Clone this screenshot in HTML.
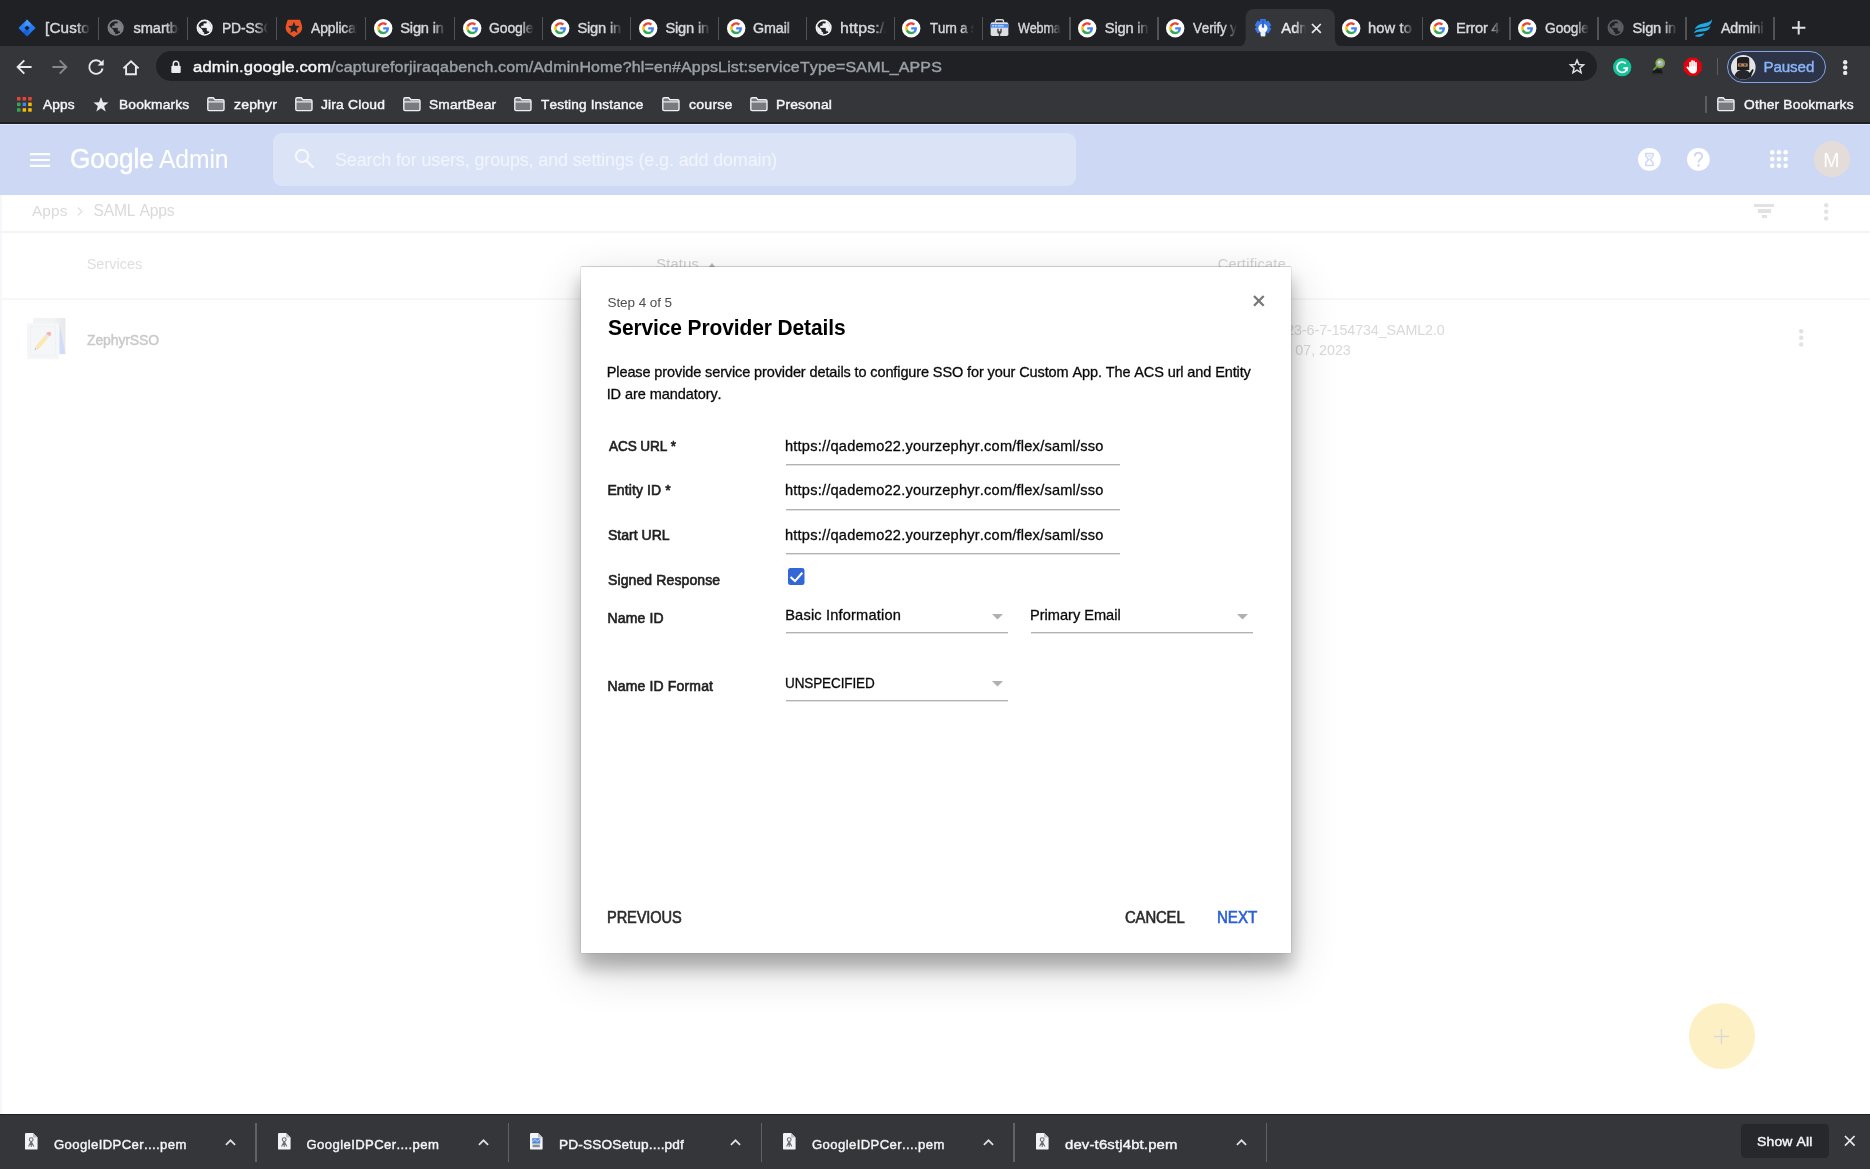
<!DOCTYPE html>
<html lang="en"><head><meta charset="utf-8"><title>Admin console</title>
<style>

*{margin:0;padding:0;box-sizing:border-box}
html,body{width:1870px;height:1169px;overflow:hidden;background:#fff;font-family:"Liberation Sans",sans-serif}
#root{position:absolute;left:0;top:0;width:1870px;height:1169px;will-change:transform}
.a{position:absolute}
.t{position:absolute;white-space:pre;font-kerning:none}
svg{position:absolute;overflow:visible}
#tabstrip{left:0;top:0;width:1870px;height:47px;background:#202124}
#toolbar{left:0;top:46px;width:1870px;height:76px;background:#35363a}
#chromeline{left:0;top:122px;width:1870px;height:2px;background:#1f2023}
#omni{left:155.7px;top:50.7px;width:1441.6px;height:30.8px;border-radius:15.4px;background:#202124}
.sep{position:absolute;width:1.6px;background:#505256;top:17.4px;height:22.2px}
.clip{position:absolute;top:14px;height:28px;overflow:hidden}
.clip .t{position:absolute}
.fade{position:absolute;top:0;right:0;height:28px;width:13px;background:linear-gradient(to right,rgba(32,33,36,0),#202124 100%)}
.fadea{position:absolute;top:0;right:0;height:28px;width:11px;background:linear-gradient(to right,rgba(53,54,58,0),#35363a 100%)}
#hdr{left:0;top:124px;width:1870px;height:70.5px;background:#cdd9f4;border-top:1px solid #dfe8fb}
#search{left:272.7px;top:132.6px;width:803.5px;height:53.3px;border-radius:9px;background:#dbe4f7}
.hl{position:absolute;left:0;width:1870px;height:2px;background:#f4f4f4}
#dlbar{left:0;top:1114px;width:1870px;height:55px;background:#35363a;border-top:1px solid #1f2023}
.dsep{position:absolute;width:1.2px;background:#5f6368;top:1122.5px;height:39px}
#showall{left:1740.5px;top:1124px;width:88.5px;height:33.5px;border-radius:4.5px;background:#27282c}
#dialog{left:580px;top:266px;width:712px;height:688px;background:#fff;border:1px solid rgba(0,0,0,.08);border-top-color:rgba(0,0,0,.17);border-bottom-color:rgba(0,0,0,.05);border-radius:2.2px;background-clip:padding-box;box-shadow:0 13.4px 16.7px rgba(0,0,0,.24),0 16px 46px rgba(0,0,0,.19)}
.ul{position:absolute;height:2px;background:linear-gradient(#b2b2b2 0,#b2b2b2 50%,#e2e2e2 50%,#e2e2e2 100%)}
#paused{left:1727.4px;top:51px;width:98.8px;height:32px;border-radius:16px;background:#2d3447;border:1.8px solid #7fa5e8}
#fab{left:1688.5px;top:1003px;width:66px;height:66px;border-radius:50%;background:#fdf0c4}
#avatar{left:1814.2px;top:141.4px;width:35.6px;height:35.6px;border-radius:50%;background:#e4dcd9}

</style></head>
<body>
<div id="root">
<div id="tabstrip" class="a"></div><div id="toolbar" class="a"></div><div id="chromeline" class="a"></div><div id="omni" class="a"></div><svg style="left:1236px;top:8.8px" width="108.6" height="38" viewBox="0 0 108.6 38"><path d="M0 38 C6.5 38 9.6 35 9.6 28.4 L9.6 9.6 C9.6 3.2 12.8 0 19.2 0 L89.3 0 C95.7 0 98.9 3.2 98.9 9.6 L98.9 28.4 C98.9 35 102 38 108.6 38 Z" fill="#35363a"/></svg><div class="clip" style="left:44.7px;width:44.9px"><span class="t" style="left:-0.08px;top:4px;font-size:14.7px;line-height:21px;color:#d6d8dc;letter-spacing:0.150px;transform:scaleX(1.0352);transform-origin:0 0;-webkit-text-stroke:0.42px currentColor;">[Custom</span><div class="fade"></div></div><div class="sep" style="left:97.6px"></div><svg style="left:17.60px;top:19.00px" width="18.00" height="18.00" viewBox="0 0 24 24" ><defs><linearGradient id="jg" x1="0" y1="0" x2="0" y2="1"><stop offset="0" stop-color="#2f8bff"/><stop offset="1" stop-color="#1b6cf0"/></linearGradient></defs><path d="M12 0.6 L23.4 12 L12 23.4 L0.6 12 Z" fill="url(#jg)"/><path d="M12 0.6 L17.6 6.2 L12 11.8 L8.4 8.2 Z" fill="#5aa2ff" opacity=".55"/><path d="M12 23.4 L6.4 17.8 L12 12.2 L15.6 15.8 Z" fill="#0f52c4" opacity=".55"/><path d="M12 8.6 L15.4 12 L12 15.4 L8.6 12 Z" fill="#202124"/></svg><div class="clip" style="left:132.8px;width:45.8px"><span class="t" style="left:0.59px;top:4px;font-size:14.7px;line-height:21px;color:#d6d8dc;letter-spacing:-0.073px;-webkit-text-stroke:0.42px currentColor;">smartbe</span><div class="fade"></div></div><div class="sep" style="left:186.6px"></div><svg style="left:106.15px;top:18.35px" width="19.30" height="19.30" viewBox="0 0 24 24" ><circle cx="12" cy="12" r="10" fill="#80848a"/><circle cx="12" cy="12" r="8.1" fill="#202124"/><path fill="#80848a" stroke="#80848a" stroke-width="0.7" d="M11 19.93c-3.95-.49-7-3.85-7-7.930 0-.62.08-1.21.21-1.79L9 15v1c0 1.1.9 2 2 2v1.930z"/><path fill="#80848a" stroke="#80848a" stroke-width="0.7" d="M17.9 17.39c-.26-.81-1-1.39-1.9-1.39h-1v-3c0-.55-.45-1-1-1H8v-2h2c.55 0 1-.45 1-1V7h2c1.1 0 2-.9 2-2v-.41c2.93 1.19 5 4.06 5 7.41 0 2.080-.8 3.97-2.1 5.390z"/></svg><div class="clip" style="left:222.5px;width:45.3px"><span class="t" style="left:-0.13px;top:4px;font-size:14.7px;line-height:21px;color:#d6d8dc;letter-spacing:-0.120px;transform:scaleX(0.9405);transform-origin:0 0;-webkit-text-stroke:0.42px currentColor;">PD-SSO</span><div class="fade"></div></div><div class="sep" style="left:275.8px"></div><svg style="left:195.25px;top:18.35px" width="19.30" height="19.30" viewBox="0 0 24 24" ><circle cx="12" cy="12" r="10" fill="#f1f3f4"/><circle cx="12" cy="12" r="8.1" fill="#202124"/><path fill="#f1f3f4" stroke="#f1f3f4" stroke-width="0.7" d="M11 19.93c-3.95-.49-7-3.85-7-7.930 0-.62.08-1.21.21-1.79L9 15v1c0 1.1.9 2 2 2v1.930z"/><path fill="#f1f3f4" stroke="#f1f3f4" stroke-width="0.7" d="M17.9 17.39c-.26-.81-1-1.39-1.9-1.39h-1v-3c0-.55-.45-1-1-1H8v-2h2c.55 0 1-.45 1-1V7h2c1.1 0 2-.9 2-2v-.41c2.93 1.19 5 4.06 5 7.41 0 2.080-.8 3.97-2.1 5.390z"/></svg><div class="clip" style="left:310.5px;width:46.2px"><span class="t" style="left:0.97px;top:4px;font-size:14.7px;line-height:21px;color:#d6d8dc;letter-spacing:-0.120px;transform:scaleX(0.9468);transform-origin:0 0;-webkit-text-stroke:0.42px currentColor;">Applicat</span><div class="fade"></div></div><div class="sep" style="left:364.7px"></div><svg style="left:284.90px;top:18.90px" width="17.80" height="18.60" viewBox="0 0 24 26" ><path d="M3.4 1 H20.6 L23.2 9 C24.4 13.2 22.8 17.6 19.3 20.3 L12 25.6 L4.7 20.3 C1.2 17.6 -0.4 13.2 0.8 9 Z" fill="#eb5424"/><path d="M12.00 4.00 L14.29 9.44 L20.18 9.94 L15.71 13.81 L17.05 19.56 L12.00 16.50 L6.95 19.56 L8.29 13.81 L3.82 9.94 L9.71 9.44 Z" fill="#24262b"/></svg><div class="clip" style="left:399.9px;width:45.9px"><span class="t" style="left:0.33px;top:4px;font-size:14.7px;line-height:21px;color:#d6d8dc;letter-spacing:-0.200px;-webkit-text-stroke:0.42px currentColor;">Sign in -</span><div class="fade"></div></div><div class="sep" style="left:453.8px"></div><svg style="left:373.80px;top:18.80px" width="18.40" height="18.40" viewBox="0 0 72 72" ><circle cx="36" cy="36" r="36" fill="#fff"/><g transform="translate(12.5,12.5) scale(0.98)"><path fill="#EA4335" d="M24 9.5c3.54 0 6.71 1.22 9.21 3.6l6.85-6.85C35.9 2.38 30.47 0 24 0 14.62 0 6.51 5.38 2.56 13.22l7.98 6.19C12.43 13.72 17.74 9.5 24 9.5z"/><path fill="#4285F4" d="M46.98 24.55c0-1.57-.15-3.09-.38-4.55H24v9.02h12.94c-.58 2.96-2.26 5.48-4.78 7.18l7.73 6c4.51-4.18 7.09-10.36 7.09-17.65z"/><path fill="#FBBC05" d="M10.53 28.59c-.48-1.45-.76-2.99-.76-4.59s.27-3.14.76-4.59l-7.98-6.19C.92 16.46 0 20.12 0 24c0 3.88.92 7.54 2.56 10.78l7.97-6.19z"/><path fill="#34A853" d="M24 48c6.48 0 11.93-2.13 15.89-5.81l-7.73-6c-2.15 1.45-4.92 2.3-8.16 2.3-6.26 0-11.57-4.22-13.47-9.91l-7.98 6.19C6.51 42.62 14.62 48 24 48z"/></g></svg><div class="clip" style="left:489.2px;width:44.6px"><span class="t" style="left:0.30px;top:4px;font-size:14.7px;line-height:21px;color:#d6d8dc;letter-spacing:-0.120px;transform:scaleX(0.9519);transform-origin:0 0;-webkit-text-stroke:0.42px currentColor;">Google A</span><div class="fade"></div></div><div class="sep" style="left:541.8px"></div><svg style="left:462.80px;top:18.80px" width="18.40" height="18.40" viewBox="0 0 72 72" ><circle cx="36" cy="36" r="36" fill="#fff"/><g transform="translate(12.5,12.5) scale(0.98)"><path fill="#EA4335" d="M24 9.5c3.54 0 6.71 1.22 9.21 3.6l6.85-6.85C35.9 2.38 30.47 0 24 0 14.62 0 6.51 5.38 2.56 13.22l7.98 6.19C12.43 13.72 17.74 9.5 24 9.5z"/><path fill="#4285F4" d="M46.98 24.55c0-1.57-.15-3.09-.38-4.55H24v9.02h12.94c-.58 2.96-2.26 5.48-4.78 7.18l7.73 6c4.51-4.18 7.09-10.36 7.09-17.65z"/><path fill="#FBBC05" d="M10.53 28.59c-.48-1.45-.76-2.99-.76-4.59s.27-3.14.76-4.59l-7.98-6.19C.92 16.46 0 20.12 0 24c0 3.88.92 7.54 2.56 10.78l7.97-6.19z"/><path fill="#34A853" d="M24 48c6.48 0 11.93-2.13 15.89-5.81l-7.73-6c-2.15 1.45-4.92 2.3-8.16 2.3-6.26 0-11.57-4.22-13.47-9.91l-7.98 6.19C6.51 42.62 14.62 48 24 48z"/></g></svg><div class="clip" style="left:577.1px;width:44.7px"><span class="t" style="left:0.33px;top:4px;font-size:14.7px;line-height:21px;color:#d6d8dc;letter-spacing:-0.200px;-webkit-text-stroke:0.42px currentColor;">Sign in -</span><div class="fade"></div></div><div class="sep" style="left:629.8px"></div><svg style="left:550.60px;top:18.80px" width="18.40" height="18.40" viewBox="0 0 72 72" ><circle cx="36" cy="36" r="36" fill="#fff"/><g transform="translate(12.5,12.5) scale(0.98)"><path fill="#EA4335" d="M24 9.5c3.54 0 6.71 1.22 9.21 3.6l6.85-6.85C35.9 2.38 30.47 0 24 0 14.62 0 6.51 5.38 2.56 13.22l7.98 6.19C12.43 13.72 17.74 9.5 24 9.5z"/><path fill="#4285F4" d="M46.98 24.55c0-1.57-.15-3.09-.38-4.55H24v9.02h12.94c-.58 2.96-2.26 5.48-4.78 7.18l7.73 6c4.51-4.18 7.09-10.36 7.09-17.65z"/><path fill="#FBBC05" d="M10.53 28.59c-.48-1.45-.76-2.99-.76-4.59s.27-3.14.76-4.59l-7.98-6.19C.92 16.46 0 20.12 0 24c0 3.88.92 7.54 2.56 10.78l7.97-6.19z"/><path fill="#34A853" d="M24 48c6.48 0 11.93-2.13 15.89-5.81l-7.73-6c-2.15 1.45-4.92 2.3-8.16 2.3-6.26 0-11.57-4.22-13.47-9.91l-7.98 6.19C6.51 42.62 14.62 48 24 48z"/></g></svg><div class="clip" style="left:665.1px;width:44.7px"><span class="t" style="left:0.33px;top:4px;font-size:14.7px;line-height:21px;color:#d6d8dc;letter-spacing:-0.200px;-webkit-text-stroke:0.42px currentColor;">Sign in -</span><div class="fade"></div></div><div class="sep" style="left:717.8px"></div><svg style="left:638.50px;top:18.80px" width="18.40" height="18.40" viewBox="0 0 72 72" ><circle cx="36" cy="36" r="36" fill="#fff"/><g transform="translate(12.5,12.5) scale(0.98)"><path fill="#EA4335" d="M24 9.5c3.54 0 6.71 1.22 9.21 3.6l6.85-6.85C35.9 2.38 30.47 0 24 0 14.62 0 6.51 5.38 2.56 13.22l7.98 6.19C12.43 13.72 17.74 9.5 24 9.5z"/><path fill="#4285F4" d="M46.98 24.55c0-1.57-.15-3.09-.38-4.55H24v9.02h12.94c-.58 2.96-2.26 5.48-4.78 7.18l7.73 6c4.51-4.18 7.09-10.36 7.09-17.65z"/><path fill="#FBBC05" d="M10.53 28.59c-.48-1.45-.76-2.99-.76-4.59s.27-3.14.76-4.59l-7.98-6.19C.92 16.46 0 20.12 0 24c0 3.88.92 7.54 2.56 10.78l7.97-6.19z"/><path fill="#34A853" d="M24 48c6.48 0 11.93-2.13 15.89-5.81l-7.73-6c-2.15 1.45-4.92 2.3-8.16 2.3-6.26 0-11.57-4.22-13.47-9.91l-7.98 6.19C6.51 42.62 14.62 48 24 48z"/></g></svg><div class="clip" style="left:752.5px;width:45.2px"><span class="t" style="left:0.28px;top:4px;font-size:14.7px;line-height:21px;color:#d6d8dc;letter-spacing:-0.120px;transform:scaleX(0.9735);transform-origin:0 0;-webkit-text-stroke:0.42px currentColor;">Gmail</span><div class="fade"></div></div><div class="sep" style="left:805.7px"></div><svg style="left:726.50px;top:18.80px" width="18.40" height="18.40" viewBox="0 0 72 72" ><circle cx="36" cy="36" r="36" fill="#fff"/><g transform="translate(12.5,12.5) scale(0.98)"><path fill="#EA4335" d="M24 9.5c3.54 0 6.71 1.22 9.21 3.6l6.85-6.85C35.9 2.38 30.47 0 24 0 14.62 0 6.51 5.38 2.56 13.22l7.98 6.19C12.43 13.72 17.74 9.5 24 9.5z"/><path fill="#4285F4" d="M46.98 24.55c0-1.57-.15-3.09-.38-4.55H24v9.02h12.94c-.58 2.96-2.26 5.48-4.78 7.18l7.73 6c4.51-4.18 7.09-10.36 7.09-17.65z"/><path fill="#FBBC05" d="M10.53 28.59c-.48-1.45-.76-2.99-.76-4.59s.27-3.14.76-4.59l-7.98-6.19C.92 16.46 0 20.12 0 24c0 3.88.92 7.54 2.56 10.78l7.97-6.19z"/><path fill="#34A853" d="M24 48c6.48 0 11.93-2.13 15.89-5.81l-7.73-6c-2.15 1.45-4.92 2.3-8.16 2.3-6.26 0-11.57-4.22-13.47-9.91l-7.98 6.19C6.51 42.62 14.62 48 24 48z"/></g></svg><div class="clip" style="left:840.5px;width:45.2px"><span class="t" style="left:-0.10px;top:4px;font-size:14.7px;line-height:21px;color:#d6d8dc;letter-spacing:0.150px;transform:scaleX(1.0828);transform-origin:0 0;-webkit-text-stroke:0.42px currentColor;">https://a</span><div class="fade"></div></div><div class="sep" style="left:893.7px"></div><svg style="left:814.05px;top:18.35px" width="19.30" height="19.30" viewBox="0 0 24 24" ><circle cx="12" cy="12" r="10" fill="#f1f3f4"/><circle cx="12" cy="12" r="8.1" fill="#202124"/><path fill="#f1f3f4" stroke="#f1f3f4" stroke-width="0.7" d="M11 19.93c-3.95-.49-7-3.85-7-7.930 0-.62.08-1.21.21-1.79L9 15v1c0 1.1.9 2 2 2v1.930z"/><path fill="#f1f3f4" stroke="#f1f3f4" stroke-width="0.7" d="M17.9 17.39c-.26-.81-1-1.39-1.9-1.39h-1v-3c0-.55-.45-1-1-1H8v-2h2c.55 0 1-.45 1-1V7h2c1.1 0 2-.9 2-2v-.41c2.93 1.19 5 4.06 5 7.41 0 2.080-.8 3.97-2.1 5.390z"/></svg><div class="clip" style="left:929.0px;width:44.5px"><span class="t" style="left:0.70px;top:4px;font-size:14.7px;line-height:21px;color:#d6d8dc;letter-spacing:-0.120px;transform:scaleX(0.8959);transform-origin:0 0;-webkit-text-stroke:0.42px currentColor;">Turn a s</span><div class="fade"></div></div><div class="sep" style="left:981.5px"></div><svg style="left:902.40px;top:18.80px" width="18.40" height="18.40" viewBox="0 0 72 72" ><circle cx="36" cy="36" r="36" fill="#fff"/><g transform="translate(12.5,12.5) scale(0.98)"><path fill="#EA4335" d="M24 9.5c3.54 0 6.71 1.22 9.21 3.6l6.85-6.85C35.9 2.38 30.47 0 24 0 14.62 0 6.51 5.38 2.56 13.22l7.98 6.19C12.43 13.72 17.74 9.5 24 9.5z"/><path fill="#4285F4" d="M46.98 24.55c0-1.57-.15-3.09-.38-4.55H24v9.02h12.94c-.58 2.96-2.26 5.48-4.78 7.18l7.73 6c4.51-4.18 7.09-10.36 7.09-17.65z"/><path fill="#FBBC05" d="M10.53 28.59c-.48-1.45-.76-2.99-.76-4.59s.27-3.14.76-4.59l-7.98-6.19C.92 16.46 0 20.12 0 24c0 3.88.92 7.54 2.56 10.78l7.97-6.19z"/><path fill="#34A853" d="M24 48c6.48 0 11.93-2.13 15.89-5.81l-7.73-6c-2.15 1.45-4.92 2.3-8.16 2.3-6.26 0-11.57-4.22-13.47-9.91l-7.98 6.19C6.51 42.62 14.62 48 24 48z"/></g></svg><div class="clip" style="left:1017.0px;width:44.4px"><span class="t" style="left:0.94px;top:4px;font-size:14.7px;line-height:21px;color:#d6d8dc;letter-spacing:-0.120px;transform:scaleX(0.8529);transform-origin:0 0;-webkit-text-stroke:0.42px currentColor;">Webmai</span><div class="fade"></div></div><div class="sep" style="left:1069.4px"></div><svg style="left:990.10px;top:19.10px" width="19.00" height="17.80" viewBox="0 0 24 22.4" ><path d="M7 4.5 V2.6 C7 1.7 7.7 1 8.6 1 H15.4 C16.3 1 17 1.7 17 2.6 V4.5" fill="none" stroke="#d5d7db" stroke-width="1.8"/><rect x="0.8" y="4" width="22.4" height="17.4" rx="2.2" fill="#dcdee2"/><rect x="0.8" y="6.3" width="22.4" height="4.6" fill="#4a8af4"/><rect x="3" y="7.9" width="2" height="1.4" fill="#fff"/><rect x="6.4" y="7.9" width="2" height="1.4" fill="#fff"/><rect x="9.8" y="7.9" width="7.5" height="1.4" fill="#dbe7fd"/><path d="M9.2 12.2 V15.6 C9.2 17.4 10.3 18.7 12 18.7 C13.7 18.7 14.8 17.4 14.8 15.6 V12.2 H13.1 V15.3 H10.9 V12.2 Z" fill="#3a3d42"/><rect x="11.1" y="17.8" width="1.8" height="3.6" fill="#3a3d42"/></svg><div class="clip" style="left:1104.5px;width:44.9px"><span class="t" style="left:0.33px;top:4px;font-size:14.7px;line-height:21px;color:#d6d8dc;letter-spacing:-0.200px;-webkit-text-stroke:0.42px currentColor;">Sign in -</span><div class="fade"></div></div><div class="sep" style="left:1157.4px"></div><svg style="left:1078.20px;top:18.80px" width="18.40" height="18.40" viewBox="0 0 72 72" ><circle cx="36" cy="36" r="36" fill="#fff"/><g transform="translate(12.5,12.5) scale(0.98)"><path fill="#EA4335" d="M24 9.5c3.54 0 6.71 1.22 9.21 3.6l6.85-6.85C35.9 2.38 30.47 0 24 0 14.62 0 6.51 5.38 2.56 13.22l7.98 6.19C12.43 13.72 17.74 9.5 24 9.5z"/><path fill="#4285F4" d="M46.98 24.55c0-1.57-.15-3.09-.38-4.55H24v9.02h12.94c-.58 2.96-2.26 5.48-4.78 7.18l7.73 6c4.51-4.18 7.09-10.36 7.09-17.65z"/><path fill="#FBBC05" d="M10.53 28.59c-.48-1.45-.76-2.99-.76-4.59s.27-3.14.76-4.59l-7.98-6.19C.92 16.46 0 20.12 0 24c0 3.88.92 7.54 2.56 10.78l7.97-6.19z"/><path fill="#34A853" d="M24 48c6.48 0 11.93-2.13 15.89-5.81l-7.73-6c-2.15 1.45-4.92 2.3-8.16 2.3-6.26 0-11.57-4.22-13.47-9.91l-7.98 6.19C6.51 42.62 14.62 48 24 48z"/></g></svg><div class="clip" style="left:1192.4px;width:45.0px"><span class="t" style="left:0.94px;top:4px;font-size:14.7px;line-height:21px;color:#d6d8dc;letter-spacing:-0.120px;transform:scaleX(0.9118);transform-origin:0 0;-webkit-text-stroke:0.42px currentColor;">Verify yo</span><div class="fade"></div></div><svg style="left:1166.10px;top:18.80px" width="18.40" height="18.40" viewBox="0 0 72 72" ><circle cx="36" cy="36" r="36" fill="#fff"/><g transform="translate(12.5,12.5) scale(0.98)"><path fill="#EA4335" d="M24 9.5c3.54 0 6.71 1.22 9.21 3.6l6.85-6.85C35.9 2.38 30.47 0 24 0 14.62 0 6.51 5.38 2.56 13.22l7.98 6.19C12.43 13.72 17.74 9.5 24 9.5z"/><path fill="#4285F4" d="M46.98 24.55c0-1.57-.15-3.09-.38-4.55H24v9.02h12.94c-.58 2.96-2.26 5.48-4.78 7.18l7.73 6c4.51-4.18 7.09-10.36 7.09-17.65z"/><path fill="#FBBC05" d="M10.53 28.59c-.48-1.45-.76-2.99-.76-4.59s.27-3.14.76-4.59l-7.98-6.19C.92 16.46 0 20.12 0 24c0 3.88.92 7.54 2.56 10.78l7.97-6.19z"/><path fill="#34A853" d="M24 48c6.48 0 11.93-2.13 15.89-5.81l-7.73-6c-2.15 1.45-4.92 2.3-8.16 2.3-6.26 0-11.57-4.22-13.47-9.91l-7.98 6.19C6.51 42.62 14.62 48 24 48z"/></g></svg><div class="clip" style="left:1280.3px;width:26.2px"><span class="t" style="left:0.97px;top:4px;font-size:14.7px;line-height:21px;color:#e8eaed;letter-spacing:0.107px;-webkit-text-stroke:0.42px currentColor;">Adm</span><div class="fadea"></div></div><svg style="left:1253.40px;top:16.80px" width="20.00" height="20.00" viewBox="-10 -10 20 20" ><path d="M-2.29 -7.40 L2.29 -7.40 L2.46 -5.36 L3.41 -4.81 L5.27 -5.69 L7.56 -1.72 L5.87 -0.55 L5.87 0.55 L7.56 1.72 L5.27 5.69 L3.41 4.81 L2.46 5.36 L2.29 7.40 L-2.29 7.40 L-2.46 5.36 L-3.41 4.81 L-5.27 5.69 L-7.56 1.72 L-5.87 0.55 L-5.87 -0.55 L-7.56 -1.72 L-5.27 -5.69 L-3.41 -4.81 L-2.46 -5.36 Z" fill="#3b78e7" stroke="#3b78e7" stroke-width="1.1" stroke-linejoin="round"/><circle cx="-0.1" cy="1.3" r="4.5" fill="#fafafa"/><rect x="-2.25" y="3.6" width="4.5" height="5.8" fill="#f1f1f1"/><rect x="-1.15" y="-7.2" width="2.3" height="7.9" rx="0.4" fill="#2f63d9"/></svg><div class="clip" style="left:1368.0px;width:45.5px"><span class="t" style="left:-0.02px;top:4px;font-size:14.7px;line-height:21px;color:#d6d8dc;letter-spacing:0.131px;-webkit-text-stroke:0.42px currentColor;">how to c</span><div class="fade"></div></div><div class="sep" style="left:1421.5px"></div><svg style="left:1342.10px;top:18.80px" width="18.40" height="18.40" viewBox="0 0 72 72" ><circle cx="36" cy="36" r="36" fill="#fff"/><g transform="translate(12.5,12.5) scale(0.98)"><path fill="#EA4335" d="M24 9.5c3.54 0 6.71 1.22 9.21 3.6l6.85-6.85C35.9 2.38 30.47 0 24 0 14.62 0 6.51 5.38 2.56 13.22l7.98 6.19C12.43 13.72 17.74 9.5 24 9.5z"/><path fill="#4285F4" d="M46.98 24.55c0-1.57-.15-3.09-.38-4.55H24v9.02h12.94c-.58 2.96-2.26 5.48-4.78 7.18l7.73 6c4.51-4.18 7.09-10.36 7.09-17.65z"/><path fill="#FBBC05" d="M10.53 28.59c-.48-1.45-.76-2.99-.76-4.59s.27-3.14.76-4.59l-7.98-6.19C.92 16.46 0 20.12 0 24c0 3.88.92 7.54 2.56 10.78l7.97-6.19z"/><path fill="#34A853" d="M24 48c6.48 0 11.93-2.13 15.89-5.81l-7.73-6c-2.15 1.45-4.92 2.3-8.16 2.3-6.26 0-11.57-4.22-13.47-9.91l-7.98 6.19C6.51 42.62 14.62 48 24 48z"/></g></svg><div class="clip" style="left:1456.3px;width:44.9px"><span class="t" style="left:-0.21px;top:4px;font-size:14.7px;line-height:21px;color:#d6d8dc;letter-spacing:-0.209px;-webkit-text-stroke:0.42px currentColor;">Error 40</span><div class="fade"></div></div><div class="sep" style="left:1509.2px"></div><svg style="left:1430.00px;top:18.80px" width="18.40" height="18.40" viewBox="0 0 72 72" ><circle cx="36" cy="36" r="36" fill="#fff"/><g transform="translate(12.5,12.5) scale(0.98)"><path fill="#EA4335" d="M24 9.5c3.54 0 6.71 1.22 9.21 3.6l6.85-6.85C35.9 2.38 30.47 0 24 0 14.62 0 6.51 5.38 2.56 13.22l7.98 6.19C12.43 13.72 17.74 9.5 24 9.5z"/><path fill="#4285F4" d="M46.98 24.55c0-1.57-.15-3.09-.38-4.55H24v9.02h12.94c-.58 2.96-2.26 5.48-4.78 7.18l7.73 6c4.51-4.18 7.09-10.36 7.09-17.65z"/><path fill="#FBBC05" d="M10.53 28.59c-.48-1.45-.76-2.99-.76-4.59s.27-3.14.76-4.59l-7.98-6.19C.92 16.46 0 20.12 0 24c0 3.88.92 7.54 2.56 10.78l7.97-6.19z"/><path fill="#34A853" d="M24 48c6.48 0 11.93-2.13 15.89-5.81l-7.73-6c-2.15 1.45-4.92 2.3-8.16 2.3-6.26 0-11.57-4.22-13.47-9.91l-7.98 6.19C6.51 42.62 14.62 48 24 48z"/></g></svg><div class="clip" style="left:1544.3px;width:44.9px"><span class="t" style="left:0.30px;top:4px;font-size:14.7px;line-height:21px;color:#d6d8dc;letter-spacing:-0.120px;transform:scaleX(0.9409);transform-origin:0 0;-webkit-text-stroke:0.42px currentColor;">Google A</span><div class="fade"></div></div><div class="sep" style="left:1597.2px"></div><svg style="left:1518.00px;top:18.80px" width="18.40" height="18.40" viewBox="0 0 72 72" ><circle cx="36" cy="36" r="36" fill="#fff"/><g transform="translate(12.5,12.5) scale(0.98)"><path fill="#EA4335" d="M24 9.5c3.54 0 6.71 1.22 9.21 3.6l6.85-6.85C35.9 2.38 30.47 0 24 0 14.62 0 6.51 5.38 2.56 13.22l7.98 6.19C12.43 13.72 17.74 9.5 24 9.5z"/><path fill="#4285F4" d="M46.98 24.55c0-1.57-.15-3.09-.38-4.55H24v9.02h12.94c-.58 2.96-2.26 5.48-4.78 7.18l7.73 6c4.51-4.18 7.09-10.36 7.09-17.65z"/><path fill="#FBBC05" d="M10.53 28.59c-.48-1.45-.76-2.99-.76-4.59s.27-3.14.76-4.59l-7.98-6.19C.92 16.46 0 20.12 0 24c0 3.88.92 7.54 2.56 10.78l7.97-6.19z"/><path fill="#34A853" d="M24 48c6.48 0 11.93-2.13 15.89-5.81l-7.73-6c-2.15 1.45-4.92 2.3-8.16 2.3-6.26 0-11.57-4.22-13.47-9.91l-7.98 6.19C6.51 42.62 14.62 48 24 48z"/></g></svg><div class="clip" style="left:1632.2px;width:45.0px"><span class="t" style="left:0.33px;top:4px;font-size:14.7px;line-height:21px;color:#d6d8dc;letter-spacing:-0.217px;-webkit-text-stroke:0.42px currentColor;">Sign in -</span><div class="fade"></div></div><div class="sep" style="left:1685.2px"></div><svg style="left:1605.55px;top:18.35px" width="19.30" height="19.30" viewBox="0 0 24 24" ><circle cx="12" cy="12" r="10" fill="#5c5f64"/><circle cx="12" cy="12" r="8.1" fill="#202124"/><path fill="#5c5f64" stroke="#5c5f64" stroke-width="0.7" d="M11 19.93c-3.95-.49-7-3.85-7-7.930 0-.62.08-1.21.21-1.79L9 15v1c0 1.1.9 2 2 2v1.930z"/><path fill="#5c5f64" stroke="#5c5f64" stroke-width="0.7" d="M17.9 17.39c-.26-.81-1-1.39-1.9-1.39h-1v-3c0-.55-.45-1-1-1H8v-2h2c.55 0 1-.45 1-1V7h2c1.1 0 2-.9 2-2v-.41c2.93 1.19 5 4.06 5 7.41 0 2.080-.8 3.97-2.1 5.390z"/></svg><div class="clip" style="left:1720.4px;width:44.7px"><span class="t" style="left:0.97px;top:4px;font-size:14.7px;line-height:21px;color:#d6d8dc;letter-spacing:-0.120px;transform:scaleX(0.9656);transform-origin:0 0;-webkit-text-stroke:0.42px currentColor;">Admini</span><div class="fade"></div></div><div class="sep" style="left:1773.1px"></div><svg style="left:1693.90px;top:19.00px" width="18.40" height="18.00" viewBox="0 0 18.4 18" ><path d="M18.1 0 C16 4.5 9 3.5 4.5 6 C2.5 7.2 1.2 8.8 1 10.2 C5 7.8 11 8.6 14.8 6.4 C17 5 18 2.6 18.1 0 Z" fill="#1fa9e2"/><path d="M16.4 6.9 C13.5 9.7 7 8.7 2.6 11.1 C1.2 11.9 0.3 12.9 0 14.1 C4 11.9 9.5 13.5 13.4 11.3 C15.2 10.3 16.2 8.7 16.4 6.9 Z" fill="#1fa9e2"/><path d="M10.6 13.9 C7.8 15.5 3.4 14.7 0.6 17.1 C3.2 18.6 9 17.9 10.6 13.9 Z" fill="#1fa9e2"/></svg><svg style="left:1312.20px;top:23.70px" width="8.80" height="8.80" viewBox="-4.40 -4.40 8.80 8.80" ><path d="M-4.40 -4.40 L4.40 4.40 M4.40 -4.40 L-4.40 4.40" stroke="#e8eaed" stroke-width="1.7" stroke-linecap="butt" fill="none"/></svg><svg style="left:1791.80px;top:21.40px" width="13.40" height="13.40" viewBox="-6.70 -6.70 13.40 13.40" ><path d="M-6.70 0 H6.70 M0 -6.70 V6.70" stroke="#dfe1e5" stroke-width="2.0" fill="none"/></svg><svg style="left:16.40px;top:58.60px" width="16.00" height="16.00" viewBox="-8 -8 16 16" ><g><path d="M7.6 0 H-6.0 M0.3 -6.7 L-6.4 0 L0.3 6.7" stroke="#e8eaed" stroke-width="1.9" fill="none" stroke-linejoin="miter"/></g></svg><svg style="left:52.30px;top:58.60px" width="16.00" height="16.00" viewBox="-8 -8 16 16" ><g transform="scale(-1,1)"><path d="M7.6 0 H-6.0 M0.3 -6.7 L-6.4 0 L0.3 6.7" stroke="#85888d" stroke-width="1.9" fill="none" stroke-linejoin="miter"/></g></svg><svg style="left:87.20px;top:57.60px" width="18.00" height="18.00" viewBox="-9 -9 18 18" ><path d="M5.3 -4.2 A6.75 6.75 0 1 0 6.65 1.5" stroke="#e8eaed" stroke-width="1.9" fill="none"/><path d="M7.7 -7.6 V-1.5 H1.6 Z" fill="#e8eaed"/></svg><svg style="left:122.30px;top:59.70px" width="18.00" height="16.00" viewBox="-9 -8 18 16" ><path d="M-7.6 0.4 L0 -6.6 L7.6 0.4 M-4.9 -1.6 V6.2 H4.9 V-1.6" stroke="#e8eaed" stroke-width="1.9" fill="none" stroke-linejoin="miter"/></svg><svg style="left:169.70px;top:60.10px" width="12.00" height="14.00" viewBox="-6 -7 12 14" ><rect x="-4.7" y="-1.2" width="9.4" height="7.2" rx="1" fill="#e8eaed"/><path d="M-2.7 -1 V-3 A2.7 2.7 0 0 1 2.7 -3 V-1" stroke="#e8eaed" stroke-width="1.5" fill="none"/></svg><span class="t" style="left:193.49px;top:56px;font-size:15.2px;line-height:21px;color:#f6f7f8;letter-spacing:0.150px;transform:scaleX(1.0929);transform-origin:0 0;-webkit-text-stroke:0.42px currentColor;">admin.google.com</span><span class="t" style="left:330.80px;top:56px;font-size:15.2px;line-height:21px;color:#9aa0a6;letter-spacing:0.150px;transform:scaleX(1.0520);transform-origin:0 0;-webkit-text-stroke:0.42px currentColor;">/captureforjiraqabench.com/AdminHome?hl=en#AppsList:serviceType=SAML_APPS</span><svg style="left:1568.40px;top:58.00px" width="18.00" height="18.00" viewBox="-9 -9 18 18" ><path d="M0.00 -6.90 L1.82 -2.51 L6.56 -2.13 L2.95 0.96 L4.06 5.58 L0.00 3.10 L-4.06 5.58 L-2.95 0.96 L-6.56 -2.13 L-1.82 -2.51 Z" stroke="#dfe1e5" stroke-width="1.5" fill="none" stroke-linejoin="miter"/></svg><svg style="left:1612.60px;top:57.60px" width="18.40" height="18.40" viewBox="-9.2 -9.2 18.4 18.4" ><circle cx="0" cy="0" r="9.15" fill="#15c39a"/><path d="M3.6 -3.7 A5.2 5.2 0 1 0 5.1 1.0 H1.2" stroke="#fff" stroke-width="1.7" fill="none"/><path d="M5.3 0.2 V4.4 L1.6 1 Z" fill="#fff"/></svg><svg style="left:1650.10px;top:57.90px" width="16.00" height="18.00" viewBox="-8 -9 16 18" ><path d="M-5.6 6.2 L-4.4 2.2 H3.4 L4.8 6.2 Z" fill="#17181a"/><path d="M-5.8 6.2 H5 V7.6 H-5.8 Z" fill="#2b2c2f"/><path d="M-4.6 3.2 L0.2 -2.2" stroke="#6a9a3a" stroke-width="1.8"/><circle cx="2.2" cy="-3.8" r="4" fill="#a9b0b6" stroke="#7cab3f" stroke-width="1.7"/><circle cx="1.2" cy="-4.8" r="1.4" fill="#d5dadf"/></svg><svg style="left:1683.40px;top:57.00px" width="19.40" height="19.40" viewBox="-9.7 -9.7 19.4 19.4" ><path d="M3.71 -8.96 L8.96 -3.71 L8.96 3.71 L3.71 8.96 L-3.71 8.96 L-8.96 3.71 L-8.96 -3.71 L-3.71 -8.96 Z" fill="#e8000d"/><rect x="-3.50" y="-5.00" width="1.75" height="8" rx="0.85" fill="#fff"/><rect x="-1.50" y="-6.60" width="1.75" height="8" rx="0.85" fill="#fff"/><rect x="0.50" y="-6.30" width="1.75" height="8" rx="0.85" fill="#fff"/><rect x="2.50" y="-4.70" width="1.75" height="8" rx="0.85" fill="#fff"/><path d="M-3.5 -0.4 H4.25 V3.0 C4.25 5.4 2.6 6.8 0.4 6.8 C-1.5 6.8 -2.6 6.0 -3.5 4.6 L-6.4 0.6 C-5.9 -0.5 -4.6 -0.3 -3.5 1.3 Z" fill="#fff"/></svg><div class="a" style="left:1717.2px;top:58.2px;width:1.3px;height:17.2px;background:#5a5d62"></div><div id="paused" class="a"></div><svg style="left:1730.70px;top:54.50px" width="24.60" height="24.60" viewBox="-12.3 -12.3 24.6 24.6" ><defs><clipPath id="avc"><circle cx="0" cy="0" r="12.3"/></clipPath></defs><circle cx="0" cy="0" r="12.3" fill="#e4e4e4"/><g clip-path="url(#avc)"><path d="M-6.3 -7.6 C-6.3 -9.4 -4.6 -10.2 -2.2 -10.2 H3.4 C5 -10.2 6 -9.2 6 -7.6 V2.6 H-6.3 Z" fill="#1d1f23"/><rect x="-5.4" y="-3.9" width="9.8" height="3.2" fill="#b98a5a"/><rect x="-4" y="-3.0" width="2" height="1.2" fill="#222"/><rect x="0.8" y="-3.0" width="2" height="1.2" fill="#222"/><path d="M-9.5 13 C-9.5 6.5 -6 2.4 -0.3 2.4 C5.2 2.4 8.6 6.5 8.6 13 Z" fill="#24262b"/><path d="M4.8 7.8 L9.2 1.8 L10.4 2.6 L7.4 9.6 Z" fill="#1d1f23"/></g></svg><span class="t" style="left:1763.45px;top:56px;font-size:15.2px;line-height:21px;color:#8ab4f8;letter-spacing:-0.118px;-webkit-text-stroke:0.42px currentColor;">Paused</span><svg style="left:1842.20px;top:58.75px" width="6.40" height="17.10" viewBox="-3.20 -8.55 6.40 17.10" ><circle cx="0" cy="-5.35" r="2.20" fill="#e8eaed"/><circle cx="0" cy="0.00" r="2.20" fill="#e8eaed"/><circle cx="0" cy="5.35" r="2.20" fill="#e8eaed"/></svg><svg style="left:17.00px;top:97.30px" width="15" height="15" viewBox="0 0 15 15"><rect x="0.00" y="0.00" width="3.50" height="3.50" fill="#ea4335"/><rect x="5.60" y="0.00" width="3.50" height="3.50" fill="#ea4335"/><rect x="11.20" y="0.00" width="3.50" height="3.50" fill="#ea4335"/><rect x="0.00" y="5.60" width="3.50" height="3.50" fill="#34a853"/><rect x="5.60" y="5.60" width="3.50" height="3.50" fill="#4285f4"/><rect x="11.20" y="5.60" width="3.50" height="3.50" fill="#fbbc05"/><rect x="0.00" y="11.20" width="3.50" height="3.50" fill="#34a853"/><rect x="5.60" y="11.20" width="3.50" height="3.50" fill="#fbbc05"/><rect x="11.20" y="11.20" width="3.50" height="3.50" fill="#fbbc05"/></svg><span class="t" style="left:42.97px;top:96px;font-size:13.0px;line-height:18px;color:#f4f5f6;letter-spacing:0.150px;transform:scaleX(1.0542);transform-origin:0 0;-webkit-text-stroke:0.42px currentColor;">Apps</span><svg style="left:92.10px;top:95.80px" width="18.00" height="18.00" viewBox="-9 -9 18 18" ><path d="M0.00 -7.90 L1.94 -2.67 L7.51 -2.44 L3.14 1.02 L4.64 6.39 L0.00 3.30 L-4.64 6.39 L-3.14 1.02 L-7.51 -2.44 L-1.94 -2.67 Z" fill="#e8eaed"/></svg><span class="t" style="left:118.67px;top:96px;font-size:13.0px;line-height:18px;color:#f4f5f6;letter-spacing:0.150px;transform:scaleX(1.0604);transform-origin:0 0;-webkit-text-stroke:0.42px currentColor;">Bookmarks</span><svg style="left:207.00px;top:97.30px" width="17.8" height="14.4" viewBox="0 0 17.8 14.4"><path d="M0.8 2.2 C0.8 1.4 1.4 0.8 2.2 0.8 H6.2 L8 2.7 H15.6 C16.4 2.7 17 3.3 17 4.1 V12.2 C17 13 16.4 13.6 15.6 13.6 H2.2 C1.4 13.6 0.8 13 0.8 12.2 Z" fill="#777a7f" stroke="#eef0f2" stroke-width="1.4"/><path d="M1 4.9 H17" stroke="#eef0f2" stroke-width="1.2"/></svg><span class="t" style="left:233.73px;top:96px;font-size:13.0px;line-height:18px;color:#f4f5f6;letter-spacing:0.150px;transform:scaleX(1.0784);transform-origin:0 0;-webkit-text-stroke:0.42px currentColor;">zephyr</span><svg style="left:294.60px;top:97.30px" width="17.8" height="14.4" viewBox="0 0 17.8 14.4"><path d="M0.8 2.2 C0.8 1.4 1.4 0.8 2.2 0.8 H6.2 L8 2.7 H15.6 C16.4 2.7 17 3.3 17 4.1 V12.2 C17 13 16.4 13.6 15.6 13.6 H2.2 C1.4 13.6 0.8 13 0.8 12.2 Z" fill="#777a7f" stroke="#eef0f2" stroke-width="1.4"/><path d="M1 4.9 H17" stroke="#eef0f2" stroke-width="1.2"/></svg><span class="t" style="left:321.48px;top:96px;font-size:13.0px;line-height:18px;color:#f4f5f6;letter-spacing:0.150px;transform:scaleX(1.0673);transform-origin:0 0;-webkit-text-stroke:0.42px currentColor;">Jira Cloud</span><svg style="left:402.60px;top:97.30px" width="17.8" height="14.4" viewBox="0 0 17.8 14.4"><path d="M0.8 2.2 C0.8 1.4 1.4 0.8 2.2 0.8 H6.2 L8 2.7 H15.6 C16.4 2.7 17 3.3 17 4.1 V12.2 C17 13 16.4 13.6 15.6 13.6 H2.2 C1.4 13.6 0.8 13 0.8 12.2 Z" fill="#777a7f" stroke="#eef0f2" stroke-width="1.4"/><path d="M1 4.9 H17" stroke="#eef0f2" stroke-width="1.2"/></svg><span class="t" style="left:429.08px;top:96px;font-size:13.0px;line-height:18px;color:#f4f5f6;letter-spacing:0.150px;transform:scaleX(1.0586);transform-origin:0 0;-webkit-text-stroke:0.42px currentColor;">SmartBear</span><svg style="left:514.10px;top:97.30px" width="17.8" height="14.4" viewBox="0 0 17.8 14.4"><path d="M0.8 2.2 C0.8 1.4 1.4 0.8 2.2 0.8 H6.2 L8 2.7 H15.6 C16.4 2.7 17 3.3 17 4.1 V12.2 C17 13 16.4 13.6 15.6 13.6 H2.2 C1.4 13.6 0.8 13 0.8 12.2 Z" fill="#777a7f" stroke="#eef0f2" stroke-width="1.4"/><path d="M1 4.9 H17" stroke="#eef0f2" stroke-width="1.2"/></svg><span class="t" style="left:541.39px;top:96px;font-size:13.0px;line-height:18px;color:#f4f5f6;letter-spacing:0.150px;transform:scaleX(1.0468);transform-origin:0 0;-webkit-text-stroke:0.42px currentColor;">Testing Instance</span><svg style="left:661.90px;top:97.30px" width="17.8" height="14.4" viewBox="0 0 17.8 14.4"><path d="M0.8 2.2 C0.8 1.4 1.4 0.8 2.2 0.8 H6.2 L8 2.7 H15.6 C16.4 2.7 17 3.3 17 4.1 V12.2 C17 13 16.4 13.6 15.6 13.6 H2.2 C1.4 13.6 0.8 13 0.8 12.2 Z" fill="#777a7f" stroke="#eef0f2" stroke-width="1.4"/><path d="M1 4.9 H17" stroke="#eef0f2" stroke-width="1.2"/></svg><span class="t" style="left:688.60px;top:96px;font-size:13.0px;line-height:18px;color:#f4f5f6;letter-spacing:0.150px;transform:scaleX(1.0918);transform-origin:0 0;-webkit-text-stroke:0.42px currentColor;">course</span><svg style="left:749.90px;top:97.30px" width="17.8" height="14.4" viewBox="0 0 17.8 14.4"><path d="M0.8 2.2 C0.8 1.4 1.4 0.8 2.2 0.8 H6.2 L8 2.7 H15.6 C16.4 2.7 17 3.3 17 4.1 V12.2 C17 13 16.4 13.6 15.6 13.6 H2.2 C1.4 13.6 0.8 13 0.8 12.2 Z" fill="#777a7f" stroke="#eef0f2" stroke-width="1.4"/><path d="M1 4.9 H17" stroke="#eef0f2" stroke-width="1.2"/></svg><span class="t" style="left:776.06px;top:96px;font-size:13.0px;line-height:18px;color:#f4f5f6;letter-spacing:0.150px;transform:scaleX(1.0669);transform-origin:0 0;-webkit-text-stroke:0.42px currentColor;">Presonal</span><svg style="left:1717.30px;top:97.30px" width="17.8" height="14.4" viewBox="0 0 17.8 14.4"><path d="M0.8 2.2 C0.8 1.4 1.4 0.8 2.2 0.8 H6.2 L8 2.7 H15.6 C16.4 2.7 17 3.3 17 4.1 V12.2 C17 13 16.4 13.6 15.6 13.6 H2.2 C1.4 13.6 0.8 13 0.8 12.2 Z" fill="#777a7f" stroke="#eef0f2" stroke-width="1.4"/><path d="M1 4.9 H17" stroke="#eef0f2" stroke-width="1.2"/></svg><span class="t" style="left:1744.15px;top:96px;font-size:13.0px;line-height:18px;color:#f4f5f6;letter-spacing:0.150px;transform:scaleX(1.0610);transform-origin:0 0;-webkit-text-stroke:0.42px currentColor;">Other Bookmarks</span><div class="a" style="left:1705.3px;top:96.3px;width:1.3px;height:17px;background:#5a5d62"></div><div class="a" style="left:0;top:195px;width:2px;height:919px;background:#f5f7fa"></div><div id="hdr" class="a"></div><div id="search" class="a"></div><svg style="left:30.20px;top:152.60px" width="20" height="14" viewBox="0 0 20 14"><path d="M0 1.1 H20 M0 7 H20 M0 12.9 H20" stroke="#fff" stroke-width="2.2"/></svg><span class="t" style="left:69.89px;top:140px;font-size:27.0px;line-height:38px;color:#fff;letter-spacing:-0.120px;transform:scaleX(0.9676);transform-origin:0 0;-webkit-text-stroke:0.45px currentColor;">Google</span><span class="t" style="left:158.65px;top:142px;font-size:25.0px;line-height:35px;color:#fff;letter-spacing:-0.120px;transform:scaleX(0.9880);transform-origin:0 0;">Admin</span><svg style="left:289.10px;top:143.40px" width="26.00" height="26.00" viewBox="-13 -13 26 26" ><circle cx="0" cy="0" r="6.15" stroke="#f6f8fe" stroke-width="2.1" fill="none"/><path d="M4.5 4.5 L11.4 11.6" stroke="#f6f8fe" stroke-width="2.3"/></svg><span class="t" style="left:335.39px;top:147px;font-size:18.6px;line-height:26px;color:#f2f5fd;letter-spacing:-0.120px;transform:scaleX(0.9645);transform-origin:0 0;">Search for users, groups, and settings (e.g. add domain)</span><svg style="left:1638.20px;top:147.80px" width="22.80" height="22.80" viewBox="-11.4 -11.4 22.8 22.8" ><circle cx="0" cy="0" r="11.35" fill="#fff"/><path d="M-3.6 -6 H3.6 V-3.4 L0.9 0 L3.6 3.4 V6 H-3.6 V3.4 L-0.9 0 L-3.6 -3.4 Z" fill="none" stroke="#cdd9f4" stroke-width="1.5" stroke-linejoin="miter"/><path d="M-2.6 -4.6 H2.6 L0 -1.4 Z" fill="#cdd9f4" opacity=".55"/></svg><svg style="left:1687.20px;top:147.80px" width="22.80" height="22.80" viewBox="-11.4 -11.4 22.8 22.8" ><circle cx="0" cy="0" r="11.35" fill="#fff"/><path d="M-3.7 -3.0 C-3.7 -5.3 -2.0 -6.6 0 -6.6 C2.1 -6.6 3.8 -5.2 3.8 -3.2 C3.8 -0.6 0.1 -0.2 0.1 3.0" stroke="#cdd9f4" stroke-width="1.9" fill="none"/><circle cx="0.1" cy="6.1" r="1.3" fill="#cdd9f4"/></svg><svg style="left:1768.75px;top:149.35px" width="19.90" height="19.90" viewBox="-9.95 -9.95 19.90 19.90" ><circle cx="-6.70" cy="-6.70" r="2.25" fill="#fff"/><circle cx="0.00" cy="-6.70" r="2.25" fill="#fff"/><circle cx="6.70" cy="-6.70" r="2.25" fill="#fff"/><circle cx="-6.70" cy="0.00" r="2.25" fill="#fff"/><circle cx="0.00" cy="0.00" r="2.25" fill="#fff"/><circle cx="6.70" cy="0.00" r="2.25" fill="#fff"/><circle cx="-6.70" cy="6.70" r="2.25" fill="#fff"/><circle cx="0.00" cy="6.70" r="2.25" fill="#fff"/><circle cx="6.70" cy="6.70" r="2.25" fill="#fff"/></svg><div id="avatar" class="a"></div><span class="t" style="left:1823.20px;top:147px;font-size:19.5px;line-height:27px;color:#fff;">M</span><span class="t" style="left:31.57px;top:201px;font-size:14.5px;line-height:20px;color:#dadada;letter-spacing:0.150px;transform:scaleX(1.0558);transform-origin:0 0;">Apps</span><svg style="left:77.4px;top:207.4px" width="6" height="9" viewBox="0 0 6 9"><path d="M0.8 0.5 L4.9 4.5 L0.8 8.5" stroke="#e0e0e0" stroke-width="1.2" fill="none"/></svg><span class="t" style="left:93.59px;top:200px;font-size:15.6px;line-height:22px;color:#dadada;letter-spacing:-0.171px;">SAML Apps</span><div class="a" style="left:1754.2px;top:204px;width:20px;height:3px;background:#e2e2e2"></div><div class="a" style="left:1757.7px;top:209.4px;width:13.2px;height:3.3px;background:#e2e2e2"></div><div class="a" style="left:1762px;top:215.1px;width:4.6px;height:2.8px;background:#e2e2e2"></div><svg style="left:1823.40px;top:201.90px" width="6.40" height="19.60" viewBox="-3.20 -9.80 6.40 19.60" ><circle cx="0" cy="-6.60" r="2.20" fill="#e2e2e2"/><circle cx="0" cy="0.00" r="2.20" fill="#e2e2e2"/><circle cx="0" cy="6.60" r="2.20" fill="#e2e2e2"/></svg><div class="hl" style="top:230.6px"></div><span class="t" style="left:86.64px;top:254px;font-size:14.5px;line-height:20px;color:#dedede;letter-spacing:0.010px;">Services</span><span class="t" style="left:656.34px;top:254px;font-size:14.5px;line-height:20px;color:#cfcfcf;letter-spacing:0.255px;">Status</span><svg style="left:708px;top:262.5px" width="8" height="5" viewBox="0 0 8 5"><path d="M0 5 L4 0 L8 5 Z" fill="#b9b9b9"/></svg><span class="t" style="left:1217.66px;top:254px;font-size:14.5px;line-height:20px;color:#d4d4d4;letter-spacing:0.280px;">Certificate</span><div class="hl" style="top:298px;height:2px;background:#f7f7f7"></div><svg style="left:26.6px;top:317.7px" width="38.4" height="41.2" viewBox="0 0 38.4 41.2"><defs><linearGradient id="ng" x1="0" y1="0" x2="1" y2="0"><stop offset="0.6" stop-color="#f1f3f5"/><stop offset="1" stop-color="#e7e8ea"/></linearGradient></defs><path d="M6.1 1 Q6.1 0 7.1 0 H38.4 V36.1 H6.1 Z" fill="url(#ng)"/><path d="M32.5 5.7 L38.4 36.1 H32.5 Z" fill="#cfdcfa"/><rect x="0" y="5.3" width="32.3" height="35.9" rx="1.6" fill="#f5f6f8"/><rect x="3.7" y="8.6" width="24.8" height="29" fill="none" stroke="#e6e8ec" stroke-width="0.8" stroke-dasharray="1 1.6"/><g transform="translate(-0.5,-1.6)"><path d="M9.4 29.6 L18.2 19.0 L21.4 21.7 L12.6 32.3 Z" fill="#fbe8ae"/><path d="M9.4 29.6 L12.6 32.3 L8.1 33.3 Z" fill="#eee3cf"/><path d="M8.9 31.8 L9.7 32.9 L8.1 33.3 Z" fill="#9a9a9a"/><path d="M18.2 19.0 L19.8 17.1 L23.0 19.8 L21.4 21.7 Z" fill="#e6e6e9"/><path d="M19.8 17.1 C20.6 15.5 22.6 14.6 24.0 15.8 C25.4 17.0 24.6 19.0 23.0 19.8 Z" fill="#f4b3ae"/></g></svg><span class="t" style="left:86.76px;top:330px;font-size:14.6px;line-height:20px;color:#c9c9c9;letter-spacing:-0.120px;transform:scaleX(0.9578);transform-origin:0 0;-webkit-text-stroke:0.45px currentColor;">ZephyrSSO</span><span class="t" style="left:1217.28px;top:320px;font-size:14.3px;line-height:20px;color:#d9d9d9;letter-spacing:-0.105px;">Google_2023-6-7-154734_SAML2.0</span><span class="t" style="left:1216.83px;top:340px;font-size:14.3px;line-height:20px;color:#d9d9d9;letter-spacing:-0.017px;">Expires Jun 07, 2023</span><svg style="left:1797.70px;top:327.90px" width="6.40" height="19.60" viewBox="-3.20 -9.80 6.40 19.60" ><circle cx="0" cy="-6.60" r="2.20" fill="#e2e2e2"/><circle cx="0" cy="0.00" r="2.20" fill="#e2e2e2"/><circle cx="0" cy="6.60" r="2.20" fill="#e2e2e2"/></svg><div id="fab" class="a"></div><svg style="left:1714.00px;top:1028.70px" width="15.00" height="15.00" viewBox="-7.50 -7.50 15.00 15.00" ><path d="M-7.50 0 H7.50 M0 -7.50 V7.50" stroke="#d9d9d9" stroke-width="1.4" fill="none"/></svg><div id="dialog" class="a"></div><span class="t" style="left:607.49px;top:293px;font-size:13.5px;line-height:19px;color:#4d4d4d;letter-spacing:-0.073px;">Step 4 of 5</span><span class="t" style="left:607.50px;top:312px;font-size:22.3px;line-height:31px;color:#000;font-weight:700;letter-spacing:-0.120px;transform:scaleX(0.9406);transform-origin:0 0;">Service Provider Details</span><span class="t" style="left:606.81px;top:362px;font-size:14.5px;line-height:20px;color:#0a0a0a;letter-spacing:-0.113px;-webkit-text-stroke:0.3px currentColor;">Please provide service provider details to configure SSO for your Custom App. The ACS url and Entity</span><span class="t" style="left:606.66px;top:384px;font-size:14.5px;line-height:20px;color:#0a0a0a;letter-spacing:-0.069px;-webkit-text-stroke:0.3px currentColor;">ID are mandatory.</span><svg style="left:1253.95px;top:295.75px" width="9.70" height="9.70" viewBox="-4.85 -4.85 9.70 9.70" ><path d="M-4.85 -4.85 L4.85 4.85 M4.85 -4.85 L-4.85 4.85" stroke="#777" stroke-width="2.3" stroke-linecap="butt" fill="none"/></svg><span class="t" style="left:608.57px;top:436px;font-size:14.0px;line-height:20px;color:#1f1f1f;letter-spacing:-0.120px;transform:scaleX(0.9706);transform-origin:0 0;-webkit-text-stroke:0.62px currentColor;">ACS URL *</span><span class="t" style="left:784.99px;top:436px;font-size:14.6px;line-height:20px;color:#0a0a0a;letter-spacing:0.215px;-webkit-text-stroke:0.3px currentColor;">https://qademo22.yourzephyr.com/flex/saml/sso</span><div class="ul" style="left:786px;top:464px;width:334px"></div><span class="t" style="left:607.45px;top:480px;font-size:14.0px;line-height:20px;color:#1f1f1f;letter-spacing:0.092px;-webkit-text-stroke:0.62px currentColor;">Entity ID *</span><span class="t" style="left:784.99px;top:480px;font-size:14.6px;line-height:20px;color:#0a0a0a;letter-spacing:0.215px;-webkit-text-stroke:0.3px currentColor;">https://qademo22.yourzephyr.com/flex/saml/sso</span><div class="ul" style="left:786px;top:509px;width:334px"></div><span class="t" style="left:607.96px;top:525px;font-size:14.0px;line-height:20px;color:#1f1f1f;letter-spacing:0.029px;-webkit-text-stroke:0.62px currentColor;">Start URL</span><span class="t" style="left:784.99px;top:525px;font-size:14.6px;line-height:20px;color:#0a0a0a;letter-spacing:0.215px;-webkit-text-stroke:0.3px currentColor;">https://qademo22.yourzephyr.com/flex/saml/sso</span><div class="ul" style="left:786px;top:553px;width:334px"></div><span class="t" style="left:607.96px;top:570px;font-size:14.0px;line-height:20px;color:#1f1f1f;letter-spacing:0.116px;-webkit-text-stroke:0.62px currentColor;">Signed Response</span><svg style="left:787.70px;top:567.90px" width="16.5" height="17.1" viewBox="0 0 16.5 17.1"><rect x="0" y="0" width="16.5" height="17.1" rx="2.4" fill="#3367d6"/><path d="M2.5 8.9 L7.0 13.1 L14.3 4.8" stroke="#fff" stroke-width="2.1" fill="none"/></svg><span class="t" style="left:607.45px;top:608px;font-size:14.0px;line-height:20px;color:#1f1f1f;letter-spacing:0.147px;-webkit-text-stroke:0.62px currentColor;">Name ID</span><span class="t" style="left:785.20px;top:605px;font-size:14.6px;line-height:20px;color:#0a0a0a;letter-spacing:0.181px;-webkit-text-stroke:0.3px currentColor;">Basic Information</span><svg style="left:991.80px;top:613.50px" width="11.00" height="5.60" viewBox="0 0 11 5.6" ><path d="M0 0 H11 L5.5 5.6 Z" fill="#b0b0b0"/></svg><div class="ul" style="left:786px;top:632px;width:222px"></div><span class="t" style="left:1030.00px;top:605px;font-size:14.6px;line-height:20px;color:#0a0a0a;letter-spacing:-0.012px;-webkit-text-stroke:0.3px currentColor;">Primary Email</span><svg style="left:1236.70px;top:613.50px" width="11.00" height="5.60" viewBox="0 0 11 5.6" ><path d="M0 0 H11 L5.5 5.6 Z" fill="#b0b0b0"/></svg><div class="ul" style="left:1031px;top:632px;width:222px"></div><span class="t" style="left:607.45px;top:676px;font-size:14.0px;line-height:20px;color:#1f1f1f;letter-spacing:0.160px;-webkit-text-stroke:0.62px currentColor;">Name ID Format</span><span class="t" style="left:784.96px;top:673px;font-size:14.6px;line-height:20px;color:#0a0a0a;letter-spacing:-0.120px;transform:scaleX(0.9264);transform-origin:0 0;-webkit-text-stroke:0.3px currentColor;">UNSPECIFIED</span><svg style="left:991.80px;top:681.00px" width="11.00" height="5.60" viewBox="0 0 11 5.6" ><path d="M0 0 H11 L5.5 5.6 Z" fill="#b0b0b0"/></svg><div class="ul" style="left:786px;top:700px;width:222px"></div><span class="t" style="left:606.80px;top:906px;font-size:16.2px;line-height:23px;color:#2b2b2b;letter-spacing:-0.120px;transform:scaleX(0.9027);transform-origin:0 0;-webkit-text-stroke:0.6px currentColor;">PREVIOUS</span><span class="t" style="left:1124.85px;top:906px;font-size:16.2px;line-height:23px;color:#2b2b2b;letter-spacing:-0.120px;transform:scaleX(0.9166);transform-origin:0 0;-webkit-text-stroke:0.6px currentColor;">CANCEL</span><span class="t" style="left:1217.25px;top:906px;font-size:16.2px;line-height:23px;color:#2c60d8;letter-spacing:-0.120px;transform:scaleX(0.9386);transform-origin:0 0;-webkit-text-stroke:0.6px currentColor;">NEXT</span><div id="dlbar" class="a"></div><svg style="left:25.00px;top:1132.50px" width="12.6" height="16.6" viewBox="0 0 12.6 16.6"><path d="M0 1.2 Q0 0 1.2 0 H8 L12.6 4.6 V15.4 Q12.6 16.6 11.4 16.6 H1.2 Q0 16.6 0 15.4 Z" fill="#f1f3f4"/><path d="M8 0 L12.6 4.6 H8 Z" fill="#bdc1c6"/><circle cx="6.2" cy="6.6" r="1.9" fill="none" stroke="#6b6e73" stroke-width="1.1"/><path d="M6.2 8.4 L3.6 13.6 M6.2 8.4 L8.8 13.6 M4.6 11.4 H7.8 M6.2 8.4 V14" stroke="#6b6e73" stroke-width="1.1" fill="none"/></svg><span class="t" style="left:54.04px;top:1136px;font-size:13.1px;line-height:18px;color:#f4f5f6;letter-spacing:0.397px;-webkit-text-stroke:0.42px currentColor;">GoogleIDPCer....pem</span><svg style="left:224.50px;top:1139.10px" width="11.00" height="7.00" viewBox="-5.5 -3.5 11 7" ><path d="M-4.6 2.4 L0 -2.2 L4.6 2.4" stroke="#dfe1e5" stroke-width="1.7" fill="none"/></svg><div class="dsep" style="left:255.4px"></div><svg style="left:277.60px;top:1132.50px" width="12.6" height="16.6" viewBox="0 0 12.6 16.6"><path d="M0 1.2 Q0 0 1.2 0 H8 L12.6 4.6 V15.4 Q12.6 16.6 11.4 16.6 H1.2 Q0 16.6 0 15.4 Z" fill="#f1f3f4"/><path d="M8 0 L12.6 4.6 H8 Z" fill="#bdc1c6"/><circle cx="6.2" cy="6.6" r="1.9" fill="none" stroke="#6b6e73" stroke-width="1.1"/><path d="M6.2 8.4 L3.6 13.6 M6.2 8.4 L8.8 13.6 M4.6 11.4 H7.8 M6.2 8.4 V14" stroke="#6b6e73" stroke-width="1.1" fill="none"/></svg><span class="t" style="left:306.54px;top:1136px;font-size:13.1px;line-height:18px;color:#f4f5f6;letter-spacing:0.397px;-webkit-text-stroke:0.42px currentColor;">GoogleIDPCer....pem</span><svg style="left:477.50px;top:1139.10px" width="11.00" height="7.00" viewBox="-5.5 -3.5 11 7" ><path d="M-4.6 2.4 L0 -2.2 L4.6 2.4" stroke="#dfe1e5" stroke-width="1.7" fill="none"/></svg><div class="dsep" style="left:508.0px"></div><svg style="left:530.20px;top:1132.50px" width="12.6" height="16.6" viewBox="0 0 12.6 16.6"><path d="M0 1.2 Q0 0 1.2 0 H8 L12.6 4.6 V15.4 Q12.6 16.6 11.4 16.6 H1.2 Q0 16.6 0 15.4 Z" fill="#f1f3f4"/><path d="M8 0 L12.6 4.6 H8 Z" fill="#bdc1c6"/><rect x="2.2" y="5.2" width="8" height="5.4" fill="#5b8bd6"/><path d="M2.2 8.6 L5 6.6 L7.4 8.4 L10.2 6.2" stroke="#dfe8f7" stroke-width="0.8" fill="none"/><rect x="2.6" y="11.6" width="7.2" height="2.6" fill="#8a8d91"/></svg><span class="t" style="left:559.08px;top:1136px;font-size:13.1px;line-height:18px;color:#f4f5f6;letter-spacing:0.150px;transform:scaleX(1.0431);transform-origin:0 0;-webkit-text-stroke:0.42px currentColor;">PD-SSOSetup....pdf</span><svg style="left:730.00px;top:1139.10px" width="11.00" height="7.00" viewBox="-5.5 -3.5 11 7" ><path d="M-4.6 2.4 L0 -2.2 L4.6 2.4" stroke="#dfe1e5" stroke-width="1.7" fill="none"/></svg><div class="dsep" style="left:760.6px"></div><svg style="left:783.00px;top:1132.50px" width="12.6" height="16.6" viewBox="0 0 12.6 16.6"><path d="M0 1.2 Q0 0 1.2 0 H8 L12.6 4.6 V15.4 Q12.6 16.6 11.4 16.6 H1.2 Q0 16.6 0 15.4 Z" fill="#f1f3f4"/><path d="M8 0 L12.6 4.6 H8 Z" fill="#bdc1c6"/><circle cx="6.2" cy="6.6" r="1.9" fill="none" stroke="#6b6e73" stroke-width="1.1"/><path d="M6.2 8.4 L3.6 13.6 M6.2 8.4 L8.8 13.6 M4.6 11.4 H7.8 M6.2 8.4 V14" stroke="#6b6e73" stroke-width="1.1" fill="none"/></svg><span class="t" style="left:812.04px;top:1136px;font-size:13.1px;line-height:18px;color:#f4f5f6;letter-spacing:0.397px;-webkit-text-stroke:0.42px currentColor;">GoogleIDPCer....pem</span><svg style="left:983.00px;top:1139.10px" width="11.00" height="7.00" viewBox="-5.5 -3.5 11 7" ><path d="M-4.6 2.4 L0 -2.2 L4.6 2.4" stroke="#dfe1e5" stroke-width="1.7" fill="none"/></svg><div class="dsep" style="left:1013.4px"></div><svg style="left:1035.50px;top:1132.50px" width="12.6" height="16.6" viewBox="0 0 12.6 16.6"><path d="M0 1.2 Q0 0 1.2 0 H8 L12.6 4.6 V15.4 Q12.6 16.6 11.4 16.6 H1.2 Q0 16.6 0 15.4 Z" fill="#f1f3f4"/><path d="M8 0 L12.6 4.6 H8 Z" fill="#bdc1c6"/><circle cx="6.2" cy="6.6" r="1.9" fill="none" stroke="#6b6e73" stroke-width="1.1"/><path d="M6.2 8.4 L3.6 13.6 M6.2 8.4 L8.8 13.6 M4.6 11.4 H7.8 M6.2 8.4 V14" stroke="#6b6e73" stroke-width="1.1" fill="none"/></svg><span class="t" style="left:1064.58px;top:1136px;font-size:13.1px;line-height:18px;color:#f4f5f6;letter-spacing:0.150px;transform:scaleX(1.1349);transform-origin:0 0;-webkit-text-stroke:0.42px currentColor;">dev-t6stj4bt.pem</span><svg style="left:1235.50px;top:1139.10px" width="11.00" height="7.00" viewBox="-5.5 -3.5 11 7" ><path d="M-4.6 2.4 L0 -2.2 L4.6 2.4" stroke="#dfe1e5" stroke-width="1.7" fill="none"/></svg><div class="dsep" style="left:1266.0px"></div><div id="showall" class="a"></div><span class="t" style="left:1756.97px;top:1133px;font-size:13.1px;line-height:18px;color:#f4f5f6;letter-spacing:0.150px;transform:scaleX(1.0667);transform-origin:0 0;-webkit-text-stroke:0.42px currentColor;">Show All</span><svg style="left:1844.70px;top:1136.40px" width="9.60" height="9.60" viewBox="-4.80 -4.80 9.60 9.60" ><path d="M-4.80 -4.80 L4.80 4.80 M4.80 -4.80 L-4.80 4.80" stroke="#e8eaed" stroke-width="1.7" stroke-linecap="butt" fill="none"/></svg>
</div>
</body></html>
